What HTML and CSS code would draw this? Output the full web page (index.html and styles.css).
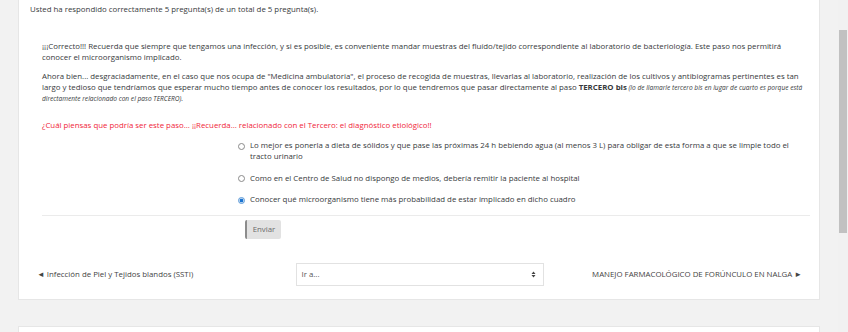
FILE: index.html
```html
<!DOCTYPE html>
<html lang="es">
<head>
    <meta charset="UTF-8">
    <title>Lección</title>
    <link rel="stylesheet" href="styles.css">
</head>
<body>
    <div class="page">
        <div class="card">
            <div class="result">Usted ha respondido correctamente 5 pregunta(s) de un total de 5 pregunta(s).</div>

            <div class="question">
                <p class="para1">¡¡¡Correcto!!! Recuerda que siempre que tengamos una infección, y si es posible, es conveniente mandar muestras del fluído/tejido correspondiente al laboratorio de bacteriología. Este paso nos permitirá conocer el microorganismo implicado.</p>
                <p class="para2">Ahora bien... desgraciadamente, en el caso que nos ocupa de "Medicina ambulatoria", el proceso de recogida de muestras, llevarlas al laboratorio, realización de los cultivos y antibiogramas pertinentes es tan largo y tedioso que tendríamos que esperar mucho tiempo antes de conocer los resultados, por lo que tendremos que pasar directamente al paso <b>TERCERO bis</b><i class="note">(lo de llamarle tercero bis en lugar de cuarto es porque está directamente relacionado con el paso TERCERO).</i></p>
                <p class="ask">¿Cuál piensas que podría ser este paso... ¡¡Recuerda... relacionado con el Tercero: el diagnóstico etiológico!!</p>

                <div class="answers">
                    <label class="option">
                        <input type="radio" name="answer">
                        <span>Lo mejor es ponerla a dieta de sólidos y que pase las próximas 24 h bebiendo agua (al menos 3 L) para obligar de esta forma a que se limpie todo el tracto urinario</span>
                    </label>
                    <label class="option">
                        <input type="radio" name="answer">
                        <span>Como en el Centro de Salud no dispongo de medios, debería remitir la paciente al hospital</span>
                    </label>
                    <label class="option">
                        <input type="radio" name="answer" checked>
                        <span>Conocer qué microorganismo tiene más probabilidad de estar implicado en dicho cuadro</span>
                    </label>
                </div>

                <hr class="divider">
                <button class="submit-btn">Enviar</button>
            </div>

            <div class="activity-nav">
                <a class="prev-link" href="#">◄ Infección de Piel y Tejidos blandos (SSTI)</a>
                <div class="jump">
                    <div class="jump-select">
                        <span>Ir a...</span>
                        <svg width="5" height="7" viewBox="0 0 5 7"><path d="M0.5 3 L2.5 0.5 L4.5 3 Z M0.5 4 L2.5 6.5 L4.5 4 Z" fill="#444"/></svg>
                    </div>
                </div>
                <a class="next-link" href="#">MANEJO FARMACOLÓGICO DE FORÚNCULO EN NALGA ►</a>
            </div>
        </div>

        <div class="card next-card"></div>
    </div>

    <div class="scrollbar"><div class="thumb"></div></div>
</body>
</html>
```
FILE: styles.css
```css
body {
    margin: 0;
    background-color: #f2f2f2;
    font-family: 'Open Sans', sans-serif;
    font-size: 7.85px;
    line-height: 11px;
    color: #373a3c;
    overflow: hidden;
    height: 332px;
}

.page {
    padding: 0 28px 0 18px;
}

.card {
    background-color: #fff;
    border: 1px solid #e6e6e6;
    border-top: 0;
    padding: 4px 9px 13px 11px;
}

.next-card {
    margin-top: 26px;
    border-top: 1px solid #e6e6e6;
    height: 20px;
    padding: 0;
}

.result {
    margin-bottom: 26px;
}

.question {
    margin-left: 12px;
}

.question p {
    margin: 0;
}

.para1 {
    margin-bottom: 7.5px !important;
}

.note {
    font-size: 6.6px;
    line-height: 8px;
    margin-left: 1.5px;
}

.ask {
    color: #f0263a;
    margin-top: 16px !important;
    margin-bottom: 9.5px !important;
}

.answers {
    padding-left: 196px;
}

.option {
    display: flex;
    align-items: flex-start;
    gap: 5px;
    margin-bottom: 10.5px;
}

.option input {
    appearance: none;
    margin: 2.5px 0 0 0;
    width: 7px;
    height: 7px;
    flex: none;
    border: 1px solid #8a8a8a;
    border-radius: 50%;
    background: #fff;
}

.option input:checked {
    border-color: #5d9ad8;
    background: radial-gradient(circle, #1a73d1 50%, #cfe2f5 58%);
}

.divider {
    border: 0;
    border-top: 1px solid #ebebeb;
    margin: -1px 0 4px 0;
}

.submit-btn {
    margin-left: 203px;
    width: 36px;
    height: 19px;
    padding: 0;
    font-family: inherit;
    font-size: 7.85px;
    color: #6b6b6b;
    background-color: #e2e2e2;
    border: 0;
    border-left: 2px solid #8c8c8c;
    border-radius: 2px;
}

.activity-nav {
    display: grid;
    grid-template-columns: 1fr 1fr 1fr;
    align-items: center;
    padding: 0 8px 0 7px;
    margin-top: 24px;
}

.activity-nav a {
    color: #444;
    text-decoration: none;
}

.next-link {
    text-align: right;
}

.jump {
    display: flex;
    justify-content: center;
}

.jump-select {
    width: 248px;
    height: 23px;
    box-sizing: border-box;
    border: 1px solid #e2e2e2;
    display: flex;
    align-items: center;
    justify-content: space-between;
    padding: 0 7px 0 5px;
    color: #555;
}

.scrollbar {
    position: fixed;
    top: 0;
    right: 0;
    width: 10px;
    height: 332px;
    background-color: #f1f1f1;
}

.thumb {
    margin: 30px 1px 0 1px;
    height: 203px;
    background-color: #c1c1c1;
}
```
